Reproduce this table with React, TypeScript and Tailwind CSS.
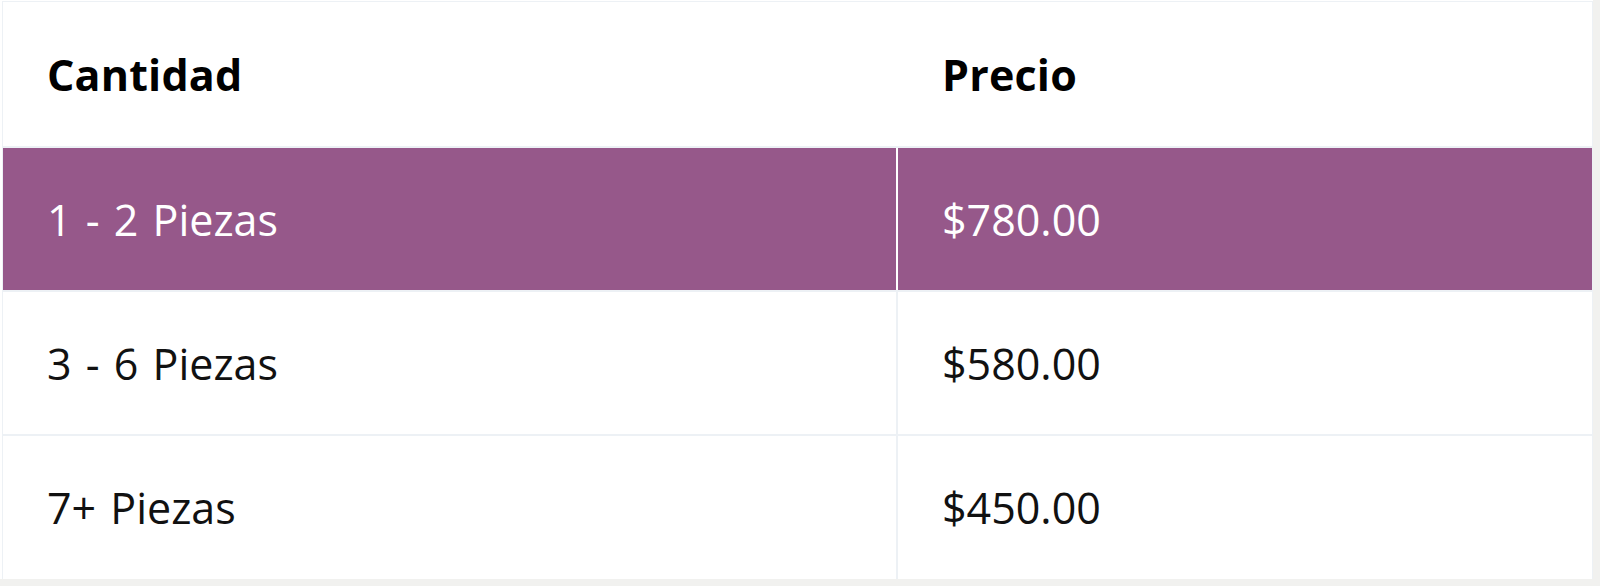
import React from "react";

const rows = [
  { q: "1 - 2 Piezas", p: "$780.00", active: true },
  { q: "3 - 6 Piezas", p: "$580.00", active: false },
  { q: "7+ Piezas", p: "$450.00", active: false },
];

export default function App() {
  return (
    <div
      className="w-[1600px] h-[586px] bg-[#f1f1ef] flex flex-col"
      style={{ fontFamily: '"Open Sans", "Noto Sans", sans-serif' }}
    >
      <div className="flex h-[579px]">
        <div className="w-[1593px] h-full bg-white pl-[2px] pt-[1px]">
          <div className="h-full border-l border-t border-r border-[#edf1f5] flex flex-col">
            <div className="flex h-[146px] pt-[3px] border-b-2 border-[#edf1f5] text-black font-bold text-[43px] [letter-spacing:0.2px]">
              <div className="w-[893px] flex items-center pl-[44px]">Cantidad</div>
              <div className="w-[2px]" />
              <div className="flex-1 flex items-center pl-[44px]">Precio</div>
            </div>
            {rows.map((r, i) => (
              <div
                key={r.q}
                className={
                  (i < rows.length - 1 ? "h-[144px] border-b-2 " : "flex-1 ") +
                  "flex pt-[2px] border-[#edf1f5] text-[43px] [word-spacing:3px] " +
                  (r.active ? "bg-[#96588a] text-white" : "bg-white text-[#111111]")
                }
              >
                <div className="w-[893px] flex items-center pl-[44px]">{r.q}</div>
                <div className={r.active ? "w-[2px] -mt-[2px] bg-white" : "w-[2px] -mt-[2px] bg-[#edf1f5]"} />
                <div className="flex-1 flex items-center pl-[44px]">{r.p}</div>
              </div>
            ))}
          </div>
        </div>
        <div className="flex-1" />
      </div>
    </div>
  );
}
